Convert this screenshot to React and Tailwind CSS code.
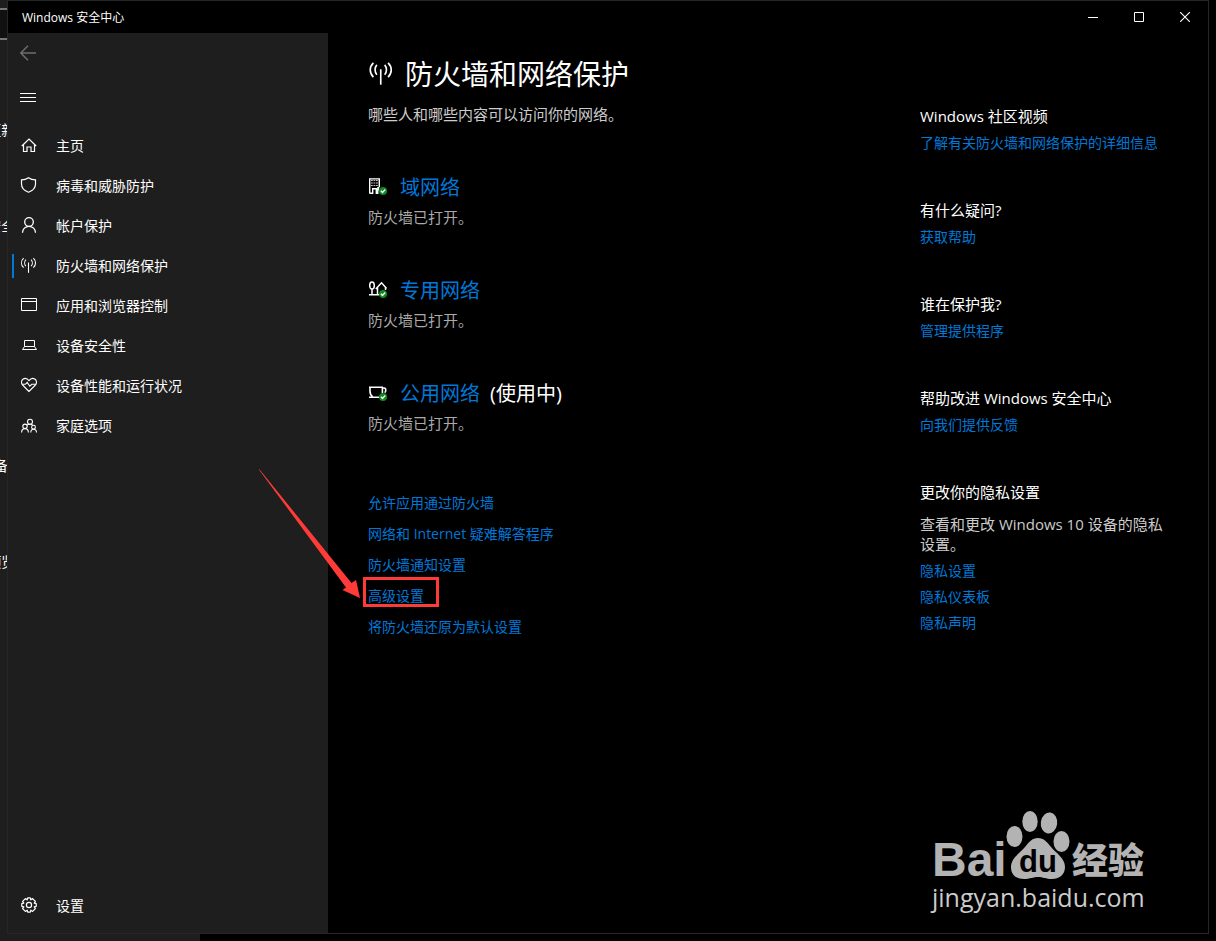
import React, { useState } from 'react';

const HomeIcon = () => (
  <svg width="18" height="18" viewBox="0 0 18 18" fill="none" stroke="currentColor" strokeWidth="1.2">
    <path d="M1.8 9 L9 2 L16.2 9 M3.5 7.6 V14.5 H7 V10 H11 V14.5 H14.5 V7.6" />
  </svg>
);

const ShieldIcon = () => (
  <svg width="18" height="18" viewBox="0 0 18 18" fill="none" stroke="currentColor" strokeWidth="1.2">
    <path d="M8.5 0.8 C6.5 2.2 4 2.9 1.5 2.9 V7 C1.5 11 4.5 13.8 8.5 15.3 C12.5 13.8 15.5 11 15.5 7 V2.9 C13 2.9 10.5 2.2 8.5 0.8 Z" />
  </svg>
);

const PersonIcon = () => (
  <svg width="18" height="18" viewBox="0 0 18 18" fill="none" stroke="currentColor" strokeWidth="1.3">
    <circle cx="9" cy="5" r="4.3" />
    <path d="M2.5 15.8 C2.5 12 5.3 9.3 9 9.3 C12.7 9.3 15.5 12 15.5 15.8" />
  </svg>
);

const AntennaIcon = ({ size = 18 }) => (
  <svg width={size} height={size} viewBox="0 0 18 18" fill="none" stroke="currentColor" strokeWidth="1.1">
    <path d="M8.5 5.5 V15.8" />
    <path d="M5.9 2.6 C4.3 4.4 4.3 7.4 5.9 9.2 M3.6 1.2 C0.8 4 0.8 7.9 3.6 10.7" />
    <path d="M11.1 2.6 C12.7 4.4 12.7 7.4 11.1 9.2 M13.4 1.2 C16.2 4 16.2 7.9 13.4 10.7" />
  </svg>
);

const BrowserIcon = () => (
  <svg width="18" height="18" viewBox="0 0 18 18" fill="none" stroke="currentColor">
    <path d="M1.5 1.5 H16.5 V13.5 H1.5 Z M1.5 4.5 H16.5" />
  </svg>
);

const LaptopIcon = () => (
  <svg width="18" height="18" viewBox="0 0 18 18" fill="none" stroke="currentColor">
    <path d="M4.5 9.5 V3.5 H14.5 V9.5 M4.5 9.5 H14.5 L16.5 12.5 H2.5 Z" />
  </svg>
);

const HeartIcon = () => (
  <svg width="18" height="18" viewBox="0 0 18 18" fill="none" stroke="currentColor" strokeWidth="1.1">
    <path d="M9 14.5 L2.6 8 C1 6.2 1.2 3.6 2.9 2.3 C4.6 1 7.2 1.3 9 3.6 C10.8 1.3 13.4 1 15.1 2.3 C16.8 3.6 17 6.2 15.4 8 Z" />
    <path d="M1.8 7.3 H5.4 L7.2 5.4 L9.8 9.2 L11.8 7.3 H16.2" />
  </svg>
);

const FamilyIcon = () => (
  <svg width="18" height="18" viewBox="0 0 18 18" fill="none" stroke="currentColor" strokeWidth="1.1">
    <circle cx="10" cy="4.7" r="2.5" />
    <circle cx="5" cy="9.3" r="2.2" />
    <circle cx="13.5" cy="10.2" r="1.9" />
    <path d="M1.6 15.6 C1.6 13 3 11.6 5 11.6 C7 11.6 8.4 13 8.4 15.6 M10.8 15.6 C10.8 13.5 11.8 12.2 13.5 12.2 C15.3 12.2 16.5 13.5 16.5 15.6 M7 8 C7.6 7.4 8.7 7.2 10 7.2 C11.4 7.2 12.3 7.6 12.9 8.3" />
  </svg>
);

const GearIcon = () => (
  <svg width="18" height="18" viewBox="0 0 18 18" fill="none" stroke="currentColor" strokeWidth="1.2" strokeLinejoin="round">
    <circle cx="9" cy="8" r="2.6" />
    <path d="M7.7 0.8 H10.3 L10.8 2.8 L12.6 1.6 L15.4 4.4 L14.2 6.2 L16.2 6.7 V9.3 L14.2 9.8 L15.4 11.6 L12.6 14.4 L10.8 13.2 L10.3 15.2 H7.7 L7.2 13.2 L5.4 14.4 L2.6 11.6 L3.8 9.8 L1.8 9.3 V6.7 L3.8 6.2 L2.6 4.4 L5.4 1.6 L7.2 2.8 Z" />
  </svg>
);

const CheckBadge = () => (
  <g>
    <circle cx="15" cy="13" r="4" fill="#0f8a1f" />
    <path d="M12.9 12.8 L14.5 14.4 L17.2 11.5" fill="none" stroke="#fff" strokeWidth="1.4" />
  </g>
);

const DomainIcon = () => (
  <svg width="20" height="20" viewBox="0 0 20 20">
    <path d="M1.7 15.5 V0.9 H11.3 V9 M1.7 15.3 H4.7 V10.7 H8.3 V15.3 H10.5" fill="none" stroke="#fff" strokeWidth="1.4" />
    <path d="M3 2.5 H10 M3 5 H10 M3 7.5 H10" stroke="#bbb" strokeWidth="1.2" strokeDasharray="1.8 0.7" />
    <path d="M9.3 9 H11.5 L10 15.5 H8.5 Z" fill="#fff" />
    <CheckBadge />
  </svg>
);

const PrivateIcon = () => (
  <svg width="20" height="20" viewBox="0 0 20 20">
    <g fill="none" stroke="#fff" strokeWidth="1.5">
      <ellipse cx="4" cy="4.5" rx="2.3" ry="3.6" />
      <path d="M4 8 V14 M1 13.8 H11 M7.8 8 L13.5 1.8 L18.6 7.6 M9.5 6.5 V14 M17.5 6.5 V9" />
    </g>
    <CheckBadge />
  </svg>
);

const PublicIcon = () => (
  <svg width="20" height="20" viewBox="0 0 20 20">
    <path d="M1 3.2 H15 M2 3.2 V7 C2 9.5 3 11.5 4.5 12.6 M14.4 3.2 V9 M15 4 H16.2 C18.2 4 18.2 7.8 16.6 8.6 M1 13.3 H11" fill="none" stroke="#fff" strokeWidth="1.6" />
    <CheckBadge />
  </svg>
);

const navItems = [
  { id: 'home', label: '主页', Icon: HomeIcon },
  { id: 'virus', label: '病毒和威胁防护', Icon: ShieldIcon },
  { id: 'account', label: '帐户保护', Icon: PersonIcon },
  { id: 'firewall', label: '防火墙和网络保护', Icon: AntennaIcon },
  { id: 'app', label: '应用和浏览器控制', Icon: BrowserIcon },
  { id: 'device', label: '设备安全性', Icon: LaptopIcon },
  { id: 'health', label: '设备性能和运行状况', Icon: HeartIcon },
  { id: 'family', label: '家庭选项', Icon: FamilyIcon },
];

const networks = [
  { name: '域网络', Icon: DomainIcon },
  { name: '专用网络', Icon: PrivateIcon },
  { name: '公用网络', Icon: PublicIcon, active: true },
];

const actions = [
  { label: '允许应用通过防火墙' },
  { label: '网络和 Internet 疑难解答程序' },
  { label: '防火墙通知设置' },
  { label: '高级设置', marked: true },
  { label: '将防火墙还原为默认设置' },
];

const helpSections = [
  { title: 'Windows 社区视频', links: ['了解有关防火墙和网络保护的详细信息'] },
  { title: '有什么疑问?', links: ['获取帮助'] },
  { title: '谁在保护我?', links: ['管理提供程序'] },
  { title: '帮助改进 Windows 安全中心', links: ['向我们提供反馈'] },
  {
    title: '更改你的隐私设置',
    text: '查看和更改 Windows 10 设备的隐私设置。',
    links: ['隐私设置', '隐私仪表板', '隐私声明'],
  },
];

const Link = ({ children, className = 'text-sm leading-5' }) => (
  <a href="#" className={`${className} text-[#0078d7] hover:text-gray-400`}>
    {children}
  </a>
);

// Settings window that sits behind the security center
const SettingsBehind = () => (
  <div className="absolute inset-y-0 left-0 w-[200px] overflow-hidden bg-[#1e1e1e] text-sm leading-5">
    <div className="mt-2 h-8 w-full border-y-2 border-[#767676] bg-[#111111]" />
    <ul className="-ml-[76px] mt-20 whitespace-nowrap">
      <li className="h-12">Windows 更新</li>
      <li className="mt-12 h-12">Windows 安全中心</li>
      <li className="mt-48 h-12">查找我的设备</li>
      <li className="mt-12 h-12">Windows 预览体验计划</li>
    </ul>
  </div>
);

const TitleBar = () => (
  <header className="flex h-8 items-center justify-between bg-black">
    <span className="pl-3.5 pt-0.5 text-xs">Windows 安全中心</span>
    <div className="flex h-full">
      <button aria-label="最小化" className="flex w-[46px] items-center justify-center hover:bg-white/10">
        <svg width="10" height="10" viewBox="0 0 10 10" stroke="#fff"><path d="M0 5.5 H10" /></svg>
      </button>
      <button aria-label="最大化" className="flex w-[46px] items-center justify-center hover:bg-white/10">
        <svg width="10" height="10" viewBox="0 0 10 10" fill="none" stroke="#fff"><path d="M0.5 0.5 H9.5 V9.5 H0.5 Z" /></svg>
      </button>
      <button aria-label="关闭" className="flex w-[46px] items-center justify-center hover:bg-red-600">
        <svg width="10" height="10" viewBox="0 0 10 10" stroke="#fff" strokeWidth="1.1"><path d="M0 0 L10 10 M10 0 L0 10" /></svg>
      </button>
    </div>
  </header>
);

const Sidebar = () => {
  const [current, setCurrent] = useState('firewall');

  return (
    <aside className="flex w-80 shrink-0 flex-col bg-[#1e1e1e] pb-[7px]">
      <button aria-label="返回" className="flex h-10 w-10 items-center justify-center text-[#6e6e6e]">
        <svg width="16" height="16" viewBox="0 0 16 16" fill="none" stroke="currentColor" strokeWidth="1.4">
          <path d="M0.8 8 H16 M8 0.8 L0.8 8 L8 15.2" />
        </svg>
      </button>
      <button aria-label="菜单" className="mt-1 flex h-10 w-10 items-center justify-center">
        <svg width="16" height="16" viewBox="0 0 16 16" stroke="#fff">
          <path d="M0 4.5 H16 M0 8.5 H16 M0 12.5 H16" />
        </svg>
      </button>

      <nav className="mt-[9px] flex flex-col">
        {navItems.map(({ id, label, Icon }) => (
          <button
            key={id}
            onClick={() => setCurrent(id)}
            className="flex h-10 items-center pl-1 text-left text-sm hover:bg-white/10"
          >
            <span className={`h-6 w-0.5 ${current === id ? 'bg-[#0078d7]' : 'bg-transparent'}`} />
            <span className="ml-1.5 w-9">
              <Icon />
            </span>
            {label}
          </button>
        ))}
      </nav>

      <button className="mt-auto flex h-10 items-center pl-3 text-left text-sm hover:bg-white/10">
        <span className="w-9">
          <GearIcon />
        </span>
        设置
      </button>
    </aside>
  );
};

// Red frame with an arrow pointing at the link
const Marker = () => (
  <>
    <span className="pointer-events-none absolute -left-[5px] -top-[9px] h-[30px] w-[76px] border-3 border-[#ff3b38]" />
    <svg
      className="pointer-events-none absolute -left-[110px] -top-[118px]"
      width="104"
      height="132"
      viewBox="0 0 104 132"
      fill="#ff3b38"
    >
      <path d="M0.5 1 L2 2 L93.5 115 L98 112 L102 130 L84.5 122 L88 119.5 Z" />
    </svg>
  </>
);

const Watermark = () => (
  <div className="pointer-events-none absolute bottom-5 right-[58px] w-[218px] text-[#b3b3b3]">
    <div className="flex items-end">
      <span className="w-[74px] font-['Liberation_Sans'] text-[48px] font-bold leading-[42px]">Bai</span>
      <svg width="64" height="70" viewBox="0 0 64 70" fill="currentColor">
        <ellipse cx="8.5" cy="25.5" rx="8" ry="10.5" />
        <ellipse cx="24" cy="10.5" rx="7.7" ry="10.5" />
        <ellipse cx="43" cy="12" rx="8.2" ry="10.5" transform="rotate(8 43 12)" />
        <ellipse cx="55.5" cy="30.5" rx="8" ry="10.5" />
        <path d="M32 27 C38 27 41 31 45 36 C50 42 59 47 59 56 C59 64 53 68 46 68 C40 68 37 66 32 66 C27 66 24 68 18 68 C10 68 5 64 5 56 C5 47 14 42 19 36 C23 31 26 27 32 27 Z" />
        <text x="13" y="61" fill="#000" fontSize="31" fontWeight="700" fontFamily="Liberation Sans, sans-serif">du</text>
      </svg>
      <span className="ml-0.5 text-[36px] font-black leading-[40px]">经验</span>
    </div>
    <div className="whitespace-nowrap text-[25px] font-medium leading-8 text-[#cccccc]">jingyan.baidu.com</div>
  </div>
);

const App = () => {
  return (
    <div className="relative flex min-h-screen bg-black font-['Open_Sans','Noto_Sans_CJK_SC',sans-serif] text-white">
      <SettingsBehind />

      <div className="relative mx-[7px] mb-[7px] flex flex-1 flex-col border border-[#262626] bg-black">
        <TitleBar />

        <div className="flex flex-1">
          <Sidebar />

          <main className="flex-1 pl-10 pt-[21px]">
            <h1 className="flex h-10 items-center gap-2.5 text-[28px]">
              <AntennaIcon size={27} />
              防火墙和网络保护
            </h1>
            <p className="mt-2.5 text-[15px] leading-5 text-[#cccccc]">哪些人和哪些内容可以访问你的网络。</p>

            <div className="mt-[50px] flex flex-col gap-[50px]">
              {networks.map(({ name, Icon, active }) => (
                <section key={name}>
                  <h2 className="flex h-7 items-center text-xl">
                    <span className="w-8">
                      <Icon />
                    </span>
                    <Link className="">{name}</Link>
                    {active && <span className="ml-2.5">(使用中)</span>}
                  </h2>
                  <p className="mt-[5px] text-[15px] leading-5 text-[#aaaaaa]">防火墙已打开。</p>
                </section>
              ))}
            </div>

            <ul className="mt-[60px] flex flex-col gap-[11px] text-sm leading-5">
              {actions.map((action) => (
                <li key={action.label} className="relative">
                  <Link>{action.label}</Link>
                  {action.marked && <Marker />}
                </li>
              ))}
            </ul>
          </main>

          <aside className="flex w-72 shrink-0 flex-col gap-[47px] pr-10 pt-[73px]">
            {helpSections.map((section) => (
              <section key={section.title} className="flex flex-col items-start gap-1.5">
                <h3 className="mb-px text-[15px] leading-5">{section.title}</h3>
                {section.text && (
                  <p className="mb-px mt-[5px] text-[15px] leading-5 text-[#cccccc]">{section.text}</p>
                )}
                {section.links.map((link) => (
                  <Link key={link}>{link}</Link>
                ))}
              </section>
            ))}
          </aside>
        </div>

        <Watermark />
      </div>
    </div>
  );
};

export default App;
